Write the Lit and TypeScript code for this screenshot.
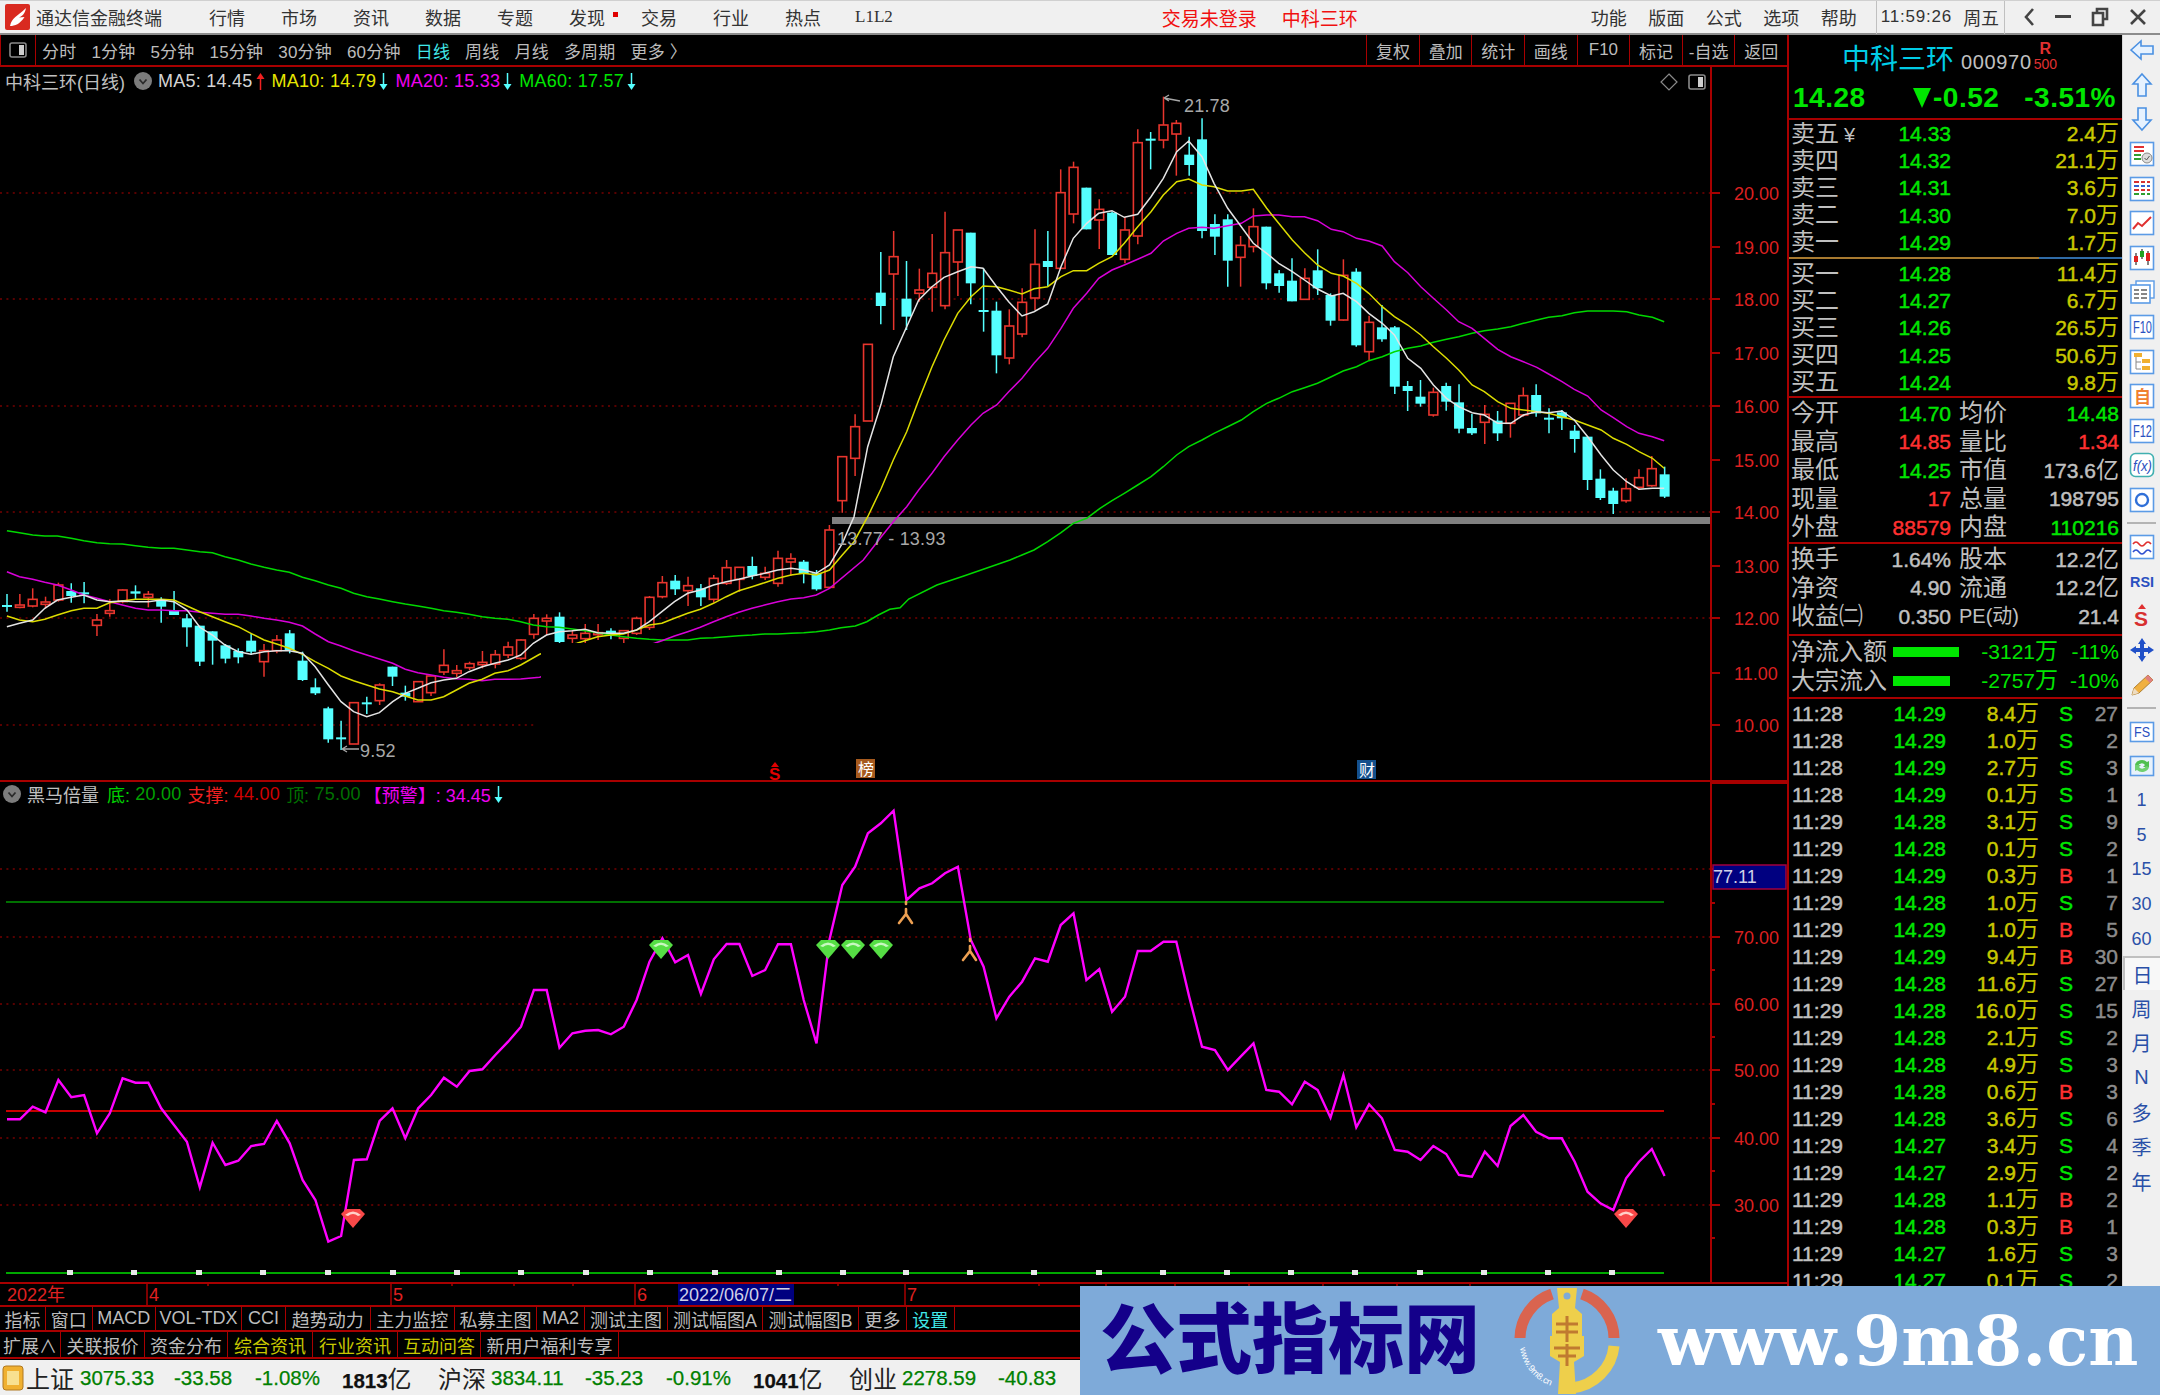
import { LitElement, html, css, svg } from "lit";
import { customElement } from "lit/decorators.js";

const RED = "#a80000";

// coordenadas leidas de la captura, por tramos: [x, y] de zoom
const toA = (p: number[]) => [p[0] / 1.742, 520 + p[1] / 3];
const toB = (p: number[]) => [780 + p[0] / 3, 80 + p[1] / 3];
const toC = (p: number[]) => [1200 + p[0] / 2.613, 90 + p[1] / 3];

function joinLine(a: number[][], b: number[][], c: number[][], cut = 835) {
  const pts = [
    ...a.map(toA).filter((p) => p[0] <= cut),
    ...b.map(toB).filter((p) => p[0] > cut && p[0] < 1295),
    ...c.map(toC).filter((p) => p[0] >= 1295),
  ];
  return pts.map((p) => `${p[0].toFixed(1)},${p[1].toFixed(1)}`).join(" ");
}

const MA5 = joinLine(
  [[12,320],[34,310],[57,300],[78,265],[100,240],[124,232],[146,225],[169,240],[191,245],[213,243],[236,245],[258,245],[281,240],[303,245],[326,270],[348,322],[370,345],[392,375],[415,395],[437,403],[460,395],[482,392],[504,392],[527,400],[549,440],[572,495],[594,545],[616,575],[639,590],[661,578],[684,545],[706,520],[728,505],[751,488],[773,480],[795,475],[817,455],[840,440],[862,430],[885,420],[907,405],[929,370],[952,345],[974,335],[997,332],[1019,328],[1041,338],[1064,340],[1086,340],[1109,330],[1131,305],[1153,275],[1175,245],[1198,220],[1220,210],[1243,195],[1265,185],[1287,178],[1310,168],[1332,160],[1355,150],[1378,145],[1400,150],[1422,160],[1445,135]],
  [[187,1390],[222,1310],[263,1100],[304,970],[340,830],[380,740],[416,660],[456,620],[492,592],[533,575],[573,560],[609,565],[650,620],[686,665],[726,708],[762,695],[803,672],[843,560],[880,475],[920,430],[956,400],[996,392],[1033,412],[1073,403],[1113,350],[1150,295],[1190,215],[1226,183],[1266,230],[1302,310],[1343,385],[1384,440],[1420,490],[1460,520],[1496,550],[1537,575]],
  [[273,570],[307,597],[343,618],[374,610],[409,635],[441,670],[476,700],[508,735],[543,805],[577,835],[610,885],[644,925],[676,950],[711,968],[743,975],[778,1000],[812,1000],[845,975],[880,965],[911,968],[946,963],[978,990],[1013,1040],[1048,1095],[1080,1140],[1115,1175],[1147,1198],[1182,1195],[1213,1195]]
);
const MA10 = joinLine(
  [[12,288],[34,300],[57,305],[78,298],[100,285],[124,272],[146,265],[169,265],[191,248],[213,243],[236,238],[258,238],[281,238],[303,240],[326,258],[348,275],[370,290],[392,305],[415,320],[437,340],[460,360],[482,372],[504,385],[527,403],[549,425],[572,445],[594,468],[616,482],[639,495],[661,507],[684,515],[706,528],[728,540],[751,540],[773,530],[795,510],[817,490],[840,478],[862,460],[885,452],[907,435],[940,403],[1005,370],[1019,362],[1041,350],[1064,345],[1086,342],[1109,330],[1131,315],[1153,310],[1175,295],[1198,280],[1220,268],[1243,250],[1265,230],[1287,212],[1310,200],[1332,188],[1355,175],[1378,165],[1400,160],[1422,165],[1445,150]],
  [[187,1425],[222,1385],[263,1310],[304,1225],[340,1140],[380,1055],[416,960],[456,860],[492,780],[533,700],[573,650],[609,618],[650,620],[686,630],[726,642],[762,626],[803,620],[843,590],[880,572],[920,572],[956,550],[996,530],[1033,490],[1073,440],[1113,395],[1150,345],[1190,305],[1226,297],[1266,315],[1302,320],[1343,333],[1384,333],[1420,328],[1460,385],[1496,430],[1537,480]],
  [[273,488],[307,525],[343,550],[374,558],[409,580],[441,610],[476,650],[508,680],[543,705],[577,735],[610,770],[644,805],[676,840],[711,885],[743,905],[778,935],[812,955],[845,960],[880,965],[911,970],[946,980],[978,990],[1013,1005],[1048,1020],[1080,1045],[1115,1063],[1147,1085],[1182,1105],[1213,1135]]
);
const MA20 = joinLine(
  [[12,155],[34,170],[57,178],[78,187],[100,195],[124,210],[146,225],[169,235],[191,245],[213,255],[236,265],[258,270],[281,270],[303,272],[326,272],[348,277],[370,280],[392,283],[415,283],[437,288],[460,295],[482,300],[504,307],[527,318],[549,342],[572,365],[594,378],[616,392],[639,405],[661,417],[684,430],[706,448],[728,458],[751,465],[773,472],[795,476],[817,478],[840,482],[862,478],[885,478],[907,477],[940,472],[1140,370],[1153,362],[1175,348],[1198,335],[1220,322],[1243,305],[1265,290],[1287,277],[1310,265],[1332,255],[1355,245],[1378,237],[1400,233],[1422,225],[1445,205]],
  [[250,1440],[304,1370],[340,1325],[380,1280],[416,1230],[456,1180],[492,1130],[533,1080],[573,1035],[609,1000],[650,975],[686,935],[726,895],[762,850],[803,805],[843,745],[880,685],[920,640],[956,595],[996,570],[1033,555],[1073,538],[1113,520],[1150,483],[1190,460],[1226,445],[1266,442],[1302,445],[1343,437],[1384,430],[1420,408],[1460,405],[1496,405],[1537,410]],
  [[273,380],[307,392],[343,418],[374,425],[409,445],[441,453],[476,468],[508,515],[543,548],[577,590],[610,625],[644,660],[676,695],[711,715],[743,745],[778,778],[812,800],[845,815],[880,832],[911,852],[946,875],[978,898],[1013,918],[1048,960],[1080,983],[1115,1010],[1147,1030],[1182,1040],[1213,1052]]
);
const MA60 = joinLine(
  [[12,32],[34,38],[57,45],[78,48],[100,48],[124,55],[146,62],[169,68],[191,71],[213,72],[236,77],[258,82],[281,85],[303,85],[326,90],[348,95],[370,98],[392,110],[415,120],[437,132],[460,142],[482,150],[504,157],[527,172],[549,182],[572,195],[594,205],[616,220],[639,230],[661,237],[684,245],[706,252],[728,258],[751,265],[773,272],[795,277],[817,283],[840,290],[862,295],[885,298],[907,305],[929,315],[952,320],[974,322],[997,327],[1019,332],[1041,338],[1064,345],[1086,350],[1109,355],[1131,358],[1153,360],[1175,360],[1198,360],[1220,355],[1243,353],[1265,350],[1287,347],[1310,345],[1332,342],[1355,342],[1378,340],[1400,338],[1422,335],[1445,330],[1465,323],[1490,318],[1510,305],[1530,285],[1550,268],[1568,263],[1583,237],[1632,195],[1679,168]],
  [[690,1440],[726,1425],[762,1410],[803,1385],[843,1358],[880,1330],[920,1315],[960,1285],[996,1262],[1033,1240],[1073,1215],[1113,1190],[1150,1160],[1190,1125],[1226,1100],[1266,1080],[1302,1060],[1343,1040],[1384,1020],[1420,995],[1460,970],[1496,955],[1537,935]],
  [[273,893],[307,880],[343,860],[374,843],[409,830],[441,812],[476,800],[508,785],[543,775],[577,768],[610,757],[644,748],[676,740],[711,730],[743,722],[778,717],[812,710],[845,700],[880,690],[911,682],[946,677],[978,668],[1013,663],[1048,663],[1080,663],[1115,665],[1147,675],[1182,682],[1213,695]],
  1000
);

// velas: cuerpo arriba, cuerpo abajo, mecha arriba, mecha abajo, tipo
type Vela = [number, number, number, number, string];
const velasA: Vela[] = [
  [255,260,222,275,"c"],[255,262,222,265,"r"],[238,258,205,262,"r"],[246,253,230,265,"r"],[195,240,188,245,"r"],[213,228,190,248,"c"],[217,222,186,250,"c"],[300,316,282,348,"r"],[272,280,238,290,"r"],[210,245,208,250,"r"],
  [214,221,196,240,"c"],[223,232,213,262,"r"],[240,260,232,308,"c"],[272,285,213,285,"c"],[295,322,282,380,"c"],[317,425,317,438,"c"],[334,362,334,434,"c"],[376,416,372,430,"c"],[393,412,385,430,"c"],[362,395,340,405,"c"],
  [392,425,372,470,"r"],[360,392,345,400,"r"],[340,390,330,400,"c"],[422,480,395,483,"c"],[502,520,475,525,"c"],[565,658,560,668,"c"],[652,652,602,690,"c"],[548,672,548,672,"r"],[547,547,530,582,"c"],[495,542,490,555,"r"],
  [440,470,440,498,"c"],[518,530,497,542,"c"],[485,545,485,545,"r"],[468,518,465,528,"r"],[436,456,388,465,"r"],[452,460,435,472,"r"],[431,443,425,450,"r"],[427,434,393,445,"r"],[404,432,390,445,"r"],[381,405,365,415,"r"],
  [360,415,358,420,"r"],[295,343,282,356,"r"],[295,303,283,345,"r"],[290,366,277,370,"c"],[345,355,330,372,"r"],[340,356,312,370,"r"],[338,342,312,360,"r"],[332,345,325,358,"c"],[332,355,332,372,"r"],[295,340,290,345,"r"],
  [232,322,228,330,"r"],[188,230,168,235,"r"],[182,208,165,225,"c"],[197,212,170,258,"r"],[205,232,192,258,"c"],[175,238,165,248,"r"],[143,190,120,195,"r"],[142,178,142,215,"r"],[138,168,110,178,"c"],[160,172,140,180,"r"],
  [115,190,92,200,"r"],[116,126,100,168,"r"],[125,162,120,190,"c"],[160,208,150,212,"c"],[30,202,15,205,"r"],
];
const velasB: Vela[] = [
  [1130,1262,1130,1298,"r"],[1040,1135,1003,1188,"r"],[793,1023,793,1023,"r"],[638,678,516,733,"c"],[530,582,453,750,"r"],[656,710,543,750,"c"],[630,640,566,665,"r"],[580,622,462,695,"r"],[518,677,395,688,"r"],[450,546,450,648,"r"],
  [458,610,458,673,"c"],[690,690,565,755,"c"],[692,826,665,880,"c"],[738,834,688,853,"r"],[667,762,625,772,"r"],[553,654,448,690,"r"],[543,561,453,620,"c"],[338,565,268,565,"r"],[262,402,245,430,"r"],[323,448,323,448,"c"],
  [388,420,358,507,"r"],[398,525,395,525,"c"],[450,538,410,550,"r"],[188,468,148,493,"r"],[176,176,156,268,"c"],[135,180,50,205,"r"],[130,162,120,287,"r"],[224,255,170,287,"c"],[178,453,115,475,"c"],[432,470,403,525,"c"],
  [418,542,403,620,"c"],[496,532,468,620,"r"],[440,500,385,517,"r"],[440,610,440,628,"c"],[580,618,570,638,"c"],[602,664,535,664,"c"],
];
const velasC: Vela[] = [
  [565,628,535,630,"r"],[541,595,478,615,"c"],[615,692,610,707,"c"],[556,690,508,692,"r"],[545,766,535,770,"c"],[697,785,677,810,"r"],[712,748,645,755,"c"],[712,890,708,912,"c"],[888,903,873,963,"c"],[920,941,870,950,"c"],
  [907,975,893,980,"r"],[888,935,878,962,"c"],[937,1016,883,1030,"c"],[1014,1030,972,1035,"c"],[973,997,945,1062,"r"],[992,1030,963,1053,"c"],[940,1000,940,1043,"r"],[917,975,892,980,"r"],[915,970,883,980,"c"],[983,983,955,1030,"c"],
  [967,985,960,1020,"c"],[1022,1047,1005,1088,"c"],[1040,1170,1040,1200,"c"],[1166,1224,1138,1230,"c"],[1202,1242,1193,1272,"c"],[1196,1232,1165,1238,"r"],[1163,1192,1138,1200,"r"],[1136,1187,1098,1190,"r"],[1153,1220,1130,1224,"c"],
];
const rebase = (v: Vela[], base: number): Vela[] =>
  v.map((k) => [base + k[0] / 3, base + k[1] / 3, base + k[2] / 3, base + k[3] / 3, k[4]]);
const VELAS: Vela[] = [...rebase(velasA, 520), ...rebase(velasB, 80), ...rebase(velasC, 90)];

const precio = [
  [20, 193], [19, 247], [18, 299], [17, 353], [16, 406], [15, 460], [14, 512], [13, 566], [12, 618], [11, 673], [10, 725],
];

const indA = [1048,1048,1010,1027,930,982,975,1090,1030,925,938,938,1015,1065,1115,1252,1118,1185,1172,1128,1122,1053,1120,1230,1290,1415,1398,1170,1168,1053,1015,1105,1015,975,923,950,903,898,855,815,770,660,660,833,790,782,780,793,770,690,575,505,577,555,672,568,522,522,618,600,523,523,690,820,510,345,290,190,160,122,390,355,340,310,290,510,590,745];
const indB = [680,635,565,575,465,430,630,597,725,680,543,543,515,515,680,830,840,900,860,820,960,965,1003,935,960,1043,915,1072,1003,1045,1140,1145,1170,1128,1152,1215,1220,1145,1188,1068,1035,1085,1105,1105,1175,1265,1300,1320,1225,1175,1137,1218];
const INDICADOR = [...indA, ...indB]
  .map((v, i) => `${(7 + 12.85 * i).toFixed(1)},${(770 + v / 3).toFixed(1)}`)
  .join(" ");

const marcasAbajo = [70, 134, 199, 263, 328, 393, 457, 521, 586, 650, 715, 779, 843, 906, 970, 1034, 1099, 1163, 1227, 1291, 1355, 1420, 1484, 1548, 1612];

const arrowIcon = (color: string, up: boolean) => html`<svg class="arrow" width="9" height="17" viewBox="0 0 9 17">
  ${up
    ? svg`<path d="M4.5 17V4" stroke=${color} stroke-width="1.5"/><path d="M4.5 0 8.5 6H.5Z" fill=${color}/>`
    : svg`<path d="M4.5 0V13" stroke=${color} stroke-width="1.5"/><path d="M4.5 17 8.5 11H.5Z" fill=${color}/>`}
</svg>`;

const roundArrow = html`<svg class="dot" width="18" height="18" viewBox="0 0 18 18">
  <circle cx="9" cy="9" r="9" fill="#7c7c7c"/><path d="M5.5 7.5 9 11.5 12.5 7.5" fill="none" stroke="#2a2a2a" stroke-width="1.8"/>
</svg>`;

const layoutIcon = html`<svg width="18" height="16" viewBox="0 0 18 16">
  <rect x="1" y="1" width="16" height="14" rx="2" fill="none" stroke="#8a8a8a" stroke-width="1.6"/><rect x="10" y="3" width="5" height="10" fill="#d0d0d0"/>
</svg>`;

const gema = (x: number, y: number, c: string, hi: string) => svg`
  <path d="M${x - 12} ${y + 5} L${x - 7} ${y} H${x + 7} L${x + 12} ${y + 5} L${x} ${y + 19} Z" fill=${c}/>
  <path d="M${x - 8} ${y + 6} Q${x} ${y - 1} ${x + 8} ${y + 6} L${x + 5} ${y + 7} Q${x} ${y + 3} ${x - 5} ${y + 7} Z" fill=${hi}/>`;

const corredor = (x: number, y: number) => svg`
  <g fill="none" stroke="#eda052" stroke-width="2.6" stroke-linecap="round">
    <path d="M${x} ${y} v2"/><path d="M${x} ${y + 7} v5 l-7 9 M${x} ${y + 12} l6 9"/>
  </g>`;

@customElement("k-chart")
export class KChart extends LitElement {
  static styles = css`
    :host { display: block; position: relative; width: 1787px; height: 1240px; }
    svg.canvas { display: block; }
    .legend { position: absolute; left: 5px; display: flex; align-items: center; font-size: 18px; white-space: nowrap; }
    .legend.up { top: 1px; }
    .legend.down { top: 714px; left: 3px; }
    .legend .arrow { margin-left: 3px; }
    .name { color: #c0c0c0; }
    .val { letter-spacing: .25px; }
    .white { color: #d4d4d4; margin-left: 6px; }
    .yellow { color: #e6e600; margin-left: 7px; }
    .magenta { color: #f000f0; margin-left: 7px; }
    .green { color: #00e600; margin-left: 7px; }
    .up .dot { margin-left: 9px; }
    .down .name { margin-left: 6px; }
    .g1 { color: #00d000; margin-left: 8px; }
    .g2 { color: #00a000; }
    .r1 { color: #f02020; margin-left: 6px; }
    .r2 { color: #d00000; }
    .d1 { color: #007000; margin-left: 6px; }
    .m1 { color: #f000f0; margin-left: 3px; }
    .icons { position: absolute; top: 6px; left: 1660px; display: flex; align-items: center; gap: 10px; }
    text { font-family: "Liberation Sans", "Noto Sans CJK SC", sans-serif; }
    .axis { font-size: 18px; fill: #dc2020; }
    .mark { font-size: 18px; fill: #a8a8a8; letter-spacing: .2px; }
    .ev { font-size: 16px; fill: #fff; }
    .date { font-size: 18px; fill: #e02020; }
    .sel { font-size: 18px; fill: #d0d0e8; }
  `;

  private _grid() {
    const dots = [193, 299, 406, 512, 618];
    return svg`
      ${dots.map((y) => svg`<line x1="0" x2="1710" y1=${y} y2=${y} stroke="#b00000" stroke-width="1.2" stroke-dasharray="2 4.4"/>`)}
      <line x1="0" x2="537" y1="725" y2="725" stroke="#b00000" stroke-width="1.2" stroke-dasharray="2 4.4"/>
      <rect x="832" y="517" width="878" height="7" fill="#808080"/>`;
  }

  private _velas() {
    return VELAS.map((k, i) => {
      const x = 7 + 12.85 * i;
      const col = k[4] === "c" ? "#55ffff" : "#e8352d";
      const h = Math.max(k[1] - k[0], 2);
      return svg`
        <line x1=${x} x2=${x} y1=${k[2]} y2=${k[3]} stroke=${col} stroke-width="1.5"/>
        ${k[4] === "c"
          ? svg`<rect x=${x - 5} y=${k[0]} width="10" height=${h} fill=${col}/>`
          : svg`<rect x=${x - 4.4} y=${k[0]} width="8.8" height=${h} fill="#000" stroke=${col} stroke-width="1.6"/>`}`;
    });
  }

  private _ejes() {
    return svg`
      <line x1="1711" x2="1711" y1="67" y2="1282" stroke=${RED} stroke-width="2"/>
      ${precio.map((p) => svg`
        <line x1="1711" x2="1720" y1=${p[1]} y2=${p[1]} stroke=${RED} stroke-width="2"/>
        <text class="axis" x="1734" y=${p[1] + 6.5}>${p[0].toFixed(2)}</text>`)}
      <line x1="0" x2="1787" y1="781" y2="781" stroke=${RED} stroke-width="2"/>
      <line x1="1711" x2="1787" y1="783" y2="783" stroke=${RED} stroke-width="2"/>`;
  }

  private _indicador() {
    const lineas = [[869, 80], [937, 70], [1004, 60], [1070, 50], [1138, 40], [1205, 30]];
    const medias = [903, 970, 1037, 1104, 1171, 1238];
    return svg`
      ${lineas.map((l) => svg`
        <line x1="0" x2="1710" y1=${l[0]} y2=${l[0]} stroke="#b00000" stroke-width="1.2" stroke-dasharray="2 4.4"/>
        <line x1="1711" x2="1720" y1=${l[0]} y2=${l[0]} stroke=${RED} stroke-width="2"/>
        ${l[1] < 80 ? svg`<text class="axis" x="1734" y=${l[0] + 6.5}>${l[1].toFixed(2)}</text>` : ""}`)}
      ${medias.map((y) => svg`<line x1="1711" x2="1715" y1=${y} y2=${y} stroke=${RED} stroke-width="2"/>`)}
      <line x1="6" x2="1664" y1="902" y2="902" stroke="#007000" stroke-width="2"/>
      <line x1="6" x2="1664" y1="1111" y2="1111" stroke="#c80000" stroke-width="2"/>
      <polyline points=${INDICADOR} fill="none" stroke="#ff00ff" stroke-width="2.4"/>
      ${[661, 828, 853, 881].map((x) => gema(x, 940, "#55dd44", "#c8f8c0"))}
      ${[353, 1626].map((x) => gema(x, 1209, "#f84848", "#ffd0c8"))}
      ${corredor(906, 902)}
      ${corredor(970, 939)}
      <line x1="6" x2="1664" y1="1273" y2="1273" stroke="#00a800" stroke-width="2"/>
      ${marcasAbajo.map((x) => svg`<rect x=${x - 3} y="1270" width="6" height="5" fill="#e8e8e8"/>`)}
      <rect x="1713" y="865" width="73" height="24" fill="#000080" stroke="#a00040" stroke-width="1.5"/>
      <text class="sel" x="1713" y="883">77.11</text>`;
  }

  private _fechas() {
    const largas = [147, 391, 635, 905];
    const cortas = [208, 452, 514, 573, 838, 1039, 1106, 1175, 1249, 1323, 1397, 1470];
    return svg`
      <line x1="0" x2="1787" y1="1283" y2="1283" stroke=${RED} stroke-width="2"/>
      <line x1="0" x2="1787" y1="1306" y2="1306" stroke=${RED} stroke-width="2"/>
      ${largas.map((x) => svg`<line x1=${x} x2=${x} y1="1283" y2="1306" stroke=${RED} stroke-width="1.5"/>`)}
      ${cortas.map((x) => svg`<line x1=${x} x2=${x} y1="1283" y2="1286" stroke=${RED} stroke-width="1.5"/>`)}
      <text class="date" x="7" y="1301">2022年</text>
      <text class="date" x="149" y="1301">4</text>
      <text class="date" x="393" y="1301">5</text>
      <text class="date" x="637" y="1301">6</text>
      <text class="date" x="907" y="1301">7</text>
      <rect x="678" y="1284" width="116" height="21" fill="#000080"/>
      <text class="sel" x="679" y="1301">2022/06/07/二</text>`;
  }

  render() {
    return html`
      <svg class="canvas" width="1787" height="1240" viewBox="0 67 1787 1240">
        ${this._grid()}
        ${this._velas()}
        <polyline points=${MA60} fill="none" stroke="#00d800" stroke-width="1.5"/>
        <polyline points=${MA20} fill="none" stroke="#d800d8" stroke-width="1.5"/>
        <polyline points=${MA10} fill="none" stroke="#dcdc00" stroke-width="1.5"/>
        <polyline points=${MA5} fill="none" stroke="#e4e4e4" stroke-width="1.5"/>
        <rect x="541" y="643" width="1168" height="110" fill="#000"/>
        <path d="M1180 101 L1164 98 M1164 98 l5 -3 M1164 98 l5 3" stroke="#a8a8a8" stroke-width="1.3" fill="none"/>
        <text class="mark" x="1184" y="112">21.78</text>
        <path d="M359 749 H342 M342 749 l5 -3 M342 749 l5 3" stroke="#a8a8a8" stroke-width="1.3" fill="none"/>
        <text class="mark" x="360" y="757">9.52</text>
        <text class="mark" x="837" y="545">13.77 - 13.93</text>
        <path d="M775 762 l4 5 h-8Z" fill="#e00000"/>
        <text x="769" y="780" font-size="17" font-weight="700" fill="#e00000">S</text>
        <rect x="856" y="759" width="19" height="19" fill="#a65a1e"/>
        <text class="ev" x="858" y="775">榜</text>
        <rect x="1357" y="760" width="19" height="19" fill="#14508c"/>
        <text class="ev" x="1359" y="776">财</text>
        ${this._ejes()}
        ${this._indicador()}
        ${this._fechas()}
      </svg>
      <div class="legend up">
        <span class="name">中科三环(日线)</span>${roundArrow}
        <span class="val white">MA5: 14.45</span>${arrowIcon("#f02020", true)}
        <span class="val yellow">MA10: 14.79</span>${arrowIcon("#55ffff", false)}
        <span class="val magenta">MA20: 15.33</span>${arrowIcon("#55ffff", false)}
        <span class="val green">MA60: 17.57</span>${arrowIcon("#55ffff", false)}
      </div>
      <div class="icons">
        <svg width="18" height="18" viewBox="0 0 18 18"><path d="M9 1 17 9 9 17 1 9Z" fill="none" stroke="#8a8a8a" stroke-width="1.2"/></svg>
        ${layoutIcon}
      </div>
      <div class="legend down">
        ${roundArrow}
        <span class="name">黑马倍量</span>
        <span class="g1">底:</span><span class="val g2">&nbsp;20.00</span>
        <span class="r1">支撑:</span><span class="val r2">&nbsp;44.00</span>
        <span class="d1">顶:</span><span class="val d1" style="margin-left:0">&nbsp;75.00</span>
        <span class="m1">【预警】: 34.45</span>${arrowIcon("#55ffff", false)}
      </div>
    `;
  }
}

const ventas = [["卖五", "14.33", "2.4"], ["卖四", "14.32", "21.1"], ["卖三", "14.31", "3.6"], ["卖二", "14.30", "7.0"], ["卖一", "14.29", "1.7"]];
const compras = [["买一", "14.28", "11.4"], ["买二", "14.27", "6.7"], ["买三", "14.26", "26.5"], ["买四", "14.25", "50.6"], ["买五", "14.24", "9.8"]];
const tabla1 = [
  ["今开", "14.70", "g", "均价", "14.48", "g"],
  ["最高", "14.85", "r", "量比", "1.34", "r"],
  ["最低", "14.25", "g", "市值", "173.6亿", "w"],
  ["现量", "17", "r", "总量", "198795", "w"],
  ["外盘", "88579", "r", "内盘", "110216", "g"],
];
const tabla2 = [
  ["换手", "1.64%", "w", "股本", "12.2亿", "w"],
  ["净资", "4.90", "w", "流通", "12.2亿", "w"],
  ["收益㈡", "0.350", "w", "PE(动)", "21.4", "w"],
];
const ticks = [
  ["11:28","14.29","8.4","S","27"],["11:28","14.29","1.0","S","2"],["11:28","14.29","2.7","S","3"],["11:28","14.29","0.1","S","1"],
  ["11:29","14.28","3.1","S","9"],["11:29","14.28","0.1","S","2"],["11:29","14.29","0.3","B","1"],["11:29","14.28","1.0","S","7"],
  ["11:29","14.29","1.0","B","5"],["11:29","14.29","9.4","B","30"],["11:29","14.28","11.6","S","27"],["11:29","14.28","16.0","S","15"],
  ["11:29","14.28","2.1","S","2"],["11:29","14.28","4.9","S","3"],["11:29","14.28","0.6","B","3"],["11:29","14.28","3.6","S","6"],
  ["11:29","14.27","3.4","S","4"],["11:29","14.27","2.9","S","2"],["11:29","14.28","1.1","B","2"],["11:29","14.28","0.3","B","1"],
  ["11:29","14.27","1.6","S","3"],["11:29","14.27","0.1","S","2"],
];

@customElement("quote-panel")
export class QuotePanel extends LitElement {
  static styles = css`
    :host { display: block; box-sizing: border-box; width: 335px; height: 1325px; border-left: 2px solid #a80000; overflow: hidden; color: #c0c0c0; line-height: 1; }
    .head { box-sizing: border-box; height: 85px; border-bottom: 2px solid #a80000; }
    .title { display: flex; align-items: flex-end; height: 34px; padding: 6px 0 0 53px; }
    .stock { font-size: 28px; line-height: 30px; color: #00cce6; }
    .code { font-size: 20px; letter-spacing: .65px; margin-left: 7px; line-height: 26px; }
    .rank { display: flex; flex-direction: column; align-items: center; color: #e03030; margin-left: 2px; align-self: flex-start; font-size: 14px; line-height: 14px; }
    .rank b { font-size: 16px; line-height: 16px; }
    .now { display: grid; grid-template-columns: 120px 88px 1fr; align-items: center; height: 30px; margin: 8px 6px 0 4px; color: #00e600; font-size: 28px; font-weight: 700; letter-spacing: .5px; }
    .now .chg { display: flex; align-items: center; gap: 2px; }
    .now .pct { text-align: right; }
    .book { box-sizing: border-box; padding: 0 3px 0 2px; }
    .sell { height: 137px; }
    .split { height: 2px; background: linear-gradient(90deg, #a87a30 0, #a87a30 250px, #306ca8 250px); }
    .buy { box-sizing: border-box; height: 139px; padding-top: 1px; border-bottom: 2px solid #a80000; }
    .row { display: grid; grid-template-columns: 100px 60px 1fr; align-items: center; height: 27.2px; }
    .lab { font-size: 24px; white-space: nowrap; }
    .num { font-size: 21px; font-weight: 400; -webkit-text-stroke: .45px; text-align: right; white-space: nowrap; }
    .vol { color: #c8c800; }
    .wan { font-size: 23px; font-weight: 400; -webkit-text-stroke: 0; }
    .yen { font-size: 20px; font-weight: 400; margin-left: 5px; }
    .g { color: #00e600; }
    .r { color: #ff3030; }
    .w { color: #c0c0c0; }
    .sect { box-sizing: border-box; padding: 1px 3px 0 2px; border-bottom: 2px solid #a80000; }
    .s1 { height: 146px; }
    .s2 { height: 92px; }
    .stat { display: grid; grid-template-columns: 50px 110px 60px 108px; align-items: center; height: 28.5px; }
    .stat .lab2 { padding-left: 8px; font-size: 24px; white-space: nowrap; }
    .stat .lab2.pe { font-size: 20px; }
    .flow { height: 63px; padding-top: 1px; }
    .fl { display: grid; grid-template-columns: 102px 72px 1fr 61px; align-items: center; height: 29px; color: #00e600; }
    .fl .lab { color: #c0c0c0; }
    .bar { display: block; height: 10px; background: #00e600; }
    .fl .n { font-size: 21px; text-align: right; white-space: nowrap; }
    .tick { display: grid; grid-template-columns: 52px 103px 93px 20px 1fr; align-items: center; height: 27px; padding: 0 4px 0 2px; }
    .tick .side { margin-left: 20px; font-size: 21px; -webkit-text-stroke: .45px; }
    .tick .cnt { color: #8c8c8c; }
    .tick .t { color: #c0c0c0; }
    .tick .volc { text-align: right; color: #c8c800; font-size: 21px; -webkit-text-stroke: .45px; white-space: nowrap; }
    .list { padding-top: 1px; }
  `;

  private _fila(r: string[], yen = false) {
    return html`<div class="row">
      <span class="lab">${r[0]}${yen ? html`<span class="yen">¥</span>` : ""}</span>
      <span class="num g">${r[1]}</span>
      <span class="num vol">${r[2]}<span class="wan">万</span></span>
    </div>`;
  }

  private _stat(r: string[]) {
    const conYi = (v: string) => v.endsWith("亿") ? html`${v.slice(0, -1)}<span class="wan">亿</span>` : v;
    return html`<div class="stat">
      <span class="lab">${r[0]}</span>
      <span class="num ${r[2]}">${r[1]}</span>
      <span class="lab2 ${r[3].startsWith("PE") ? "pe" : ""}">${r[3]}</span>
      <span class="num ${r[5]}">${conYi(r[4])}</span>
    </div>`;
  }

  render() {
    return html`
      <div class="head">
        <div class="title">
          <span class="stock">中科三环</span>
          <span class="code">000970</span>
          <span class="rank"><b>R</b>500</span>
        </div>
        <div class="now">
          <span>14.28</span>
          <span class="chg"><svg width="18" height="20" viewBox="0 0 18 20"><path d="M0 0H18L9 20Z" fill="#00e600"/></svg>-0.52</span>
          <span class="pct">-3.51%</span>
        </div>
      </div>
      <div class="book sell">${ventas.map((r, i) => this._fila(r, i === 0))}</div>
      <div class="split"></div>
      <div class="book buy">${compras.map((r) => this._fila(r))}</div>
      <div class="sect s1">${tabla1.map((r) => this._stat(r))}</div>
      <div class="sect s2">${tabla2.map((r) => this._stat(r))}</div>
      <div class="sect flow">
        <div class="fl"><span class="lab">净流入额</span><span><i class="bar" style="width:66px"></i></span><span class="n">-3121<span class="wan">万</span></span><span class="n">-11%</span></div>
        <div class="fl"><span class="lab">大宗流入</span><span><i class="bar" style="width:57px"></i></span><span class="n">-2757<span class="wan">万</span></span><span class="n">-10%</span></div>
      </div>
      <div class="list">
        ${ticks.map((t) => html`<div class="tick">
          <span class="num t">${t[0]}</span>
          <span class="num g">${t[1]}</span>
          <span class="volc">${t[2]}<span class="wan">万</span></span>
          <span class="side ${t[3] === "S" ? "g" : "r"}">${t[3]}</span>
          <span class="num cnt">${t[4]}</span>
        </div>`)}
      </div>
    `;
  }
}

const BOX = svg`<rect x="1.5" y="1.5" width="23" height="23" fill="#fff" stroke="#5b9be6" stroke-width="1.6"/>`;
const herramientas: Record<string, unknown> = {
  back: svg`<path d="M2 13 12 4V9H24V17H12V22Z" fill="#e6f2ff" stroke="#4a90e2" stroke-width="1.6"/>`,
  up: svg`<path d="M13 2 22 12H17V24H9V12H4Z" fill="#e6f2ff" stroke="#4a90e2" stroke-width="1.6"/>`,
  down: svg`<path d="M13 24 22 14H17V2H9V14H4Z" fill="#e6f2ff" stroke="#4a90e2" stroke-width="1.6"/>`,
  check: svg`${BOX}<path d="M5 6h10M5 10h10" stroke="#e03030" stroke-width="2"/><path d="M5 14h7M5 18h7" stroke="#30a030" stroke-width="2"/><circle cx="18" cy="17" r="5" fill="#ddd" stroke="#888"/><path d="M15.5 17l2 2 3-4" fill="none" stroke="#555"/>`,
  bars: svg`${BOX}<path d="M5 6h5M12 6h4M18 6h3" stroke="#d83030" stroke-width="2"/><path d="M5 10h5M12 10h4M18 10h3" stroke="#3060d0" stroke-width="2"/><path d="M5 14h5M12 14h4M18 14h3" stroke="#d83030" stroke-width="2"/><path d="M5 18h5M12 18h4M18 18h3" stroke="#30a030" stroke-width="2"/>`,
  line: svg`${BOX}<path d="M4 19 9 13 13 16 22 7" fill="none" stroke="#e03030" stroke-width="2"/>`,
  candle: svg`${BOX}<path d="M7 8v12M13 4v10M19 6v14" stroke="#303030" stroke-width="1.2"/><rect x="5" y="11" width="4" height="6" fill="#e02020"/><rect x="11" y="6" width="4" height="6" fill="#20a020"/><rect x="17" y="8" width="4" height="8" fill="#e02020"/>`,
  doc: svg`<rect x="7" y="2" width="18" height="17" fill="#fff" stroke="#5b9be6" stroke-width="1.4"/><rect x="2" y="6" width="19" height="18" fill="#fff" stroke="#5b9be6" stroke-width="1.6"/><path d="M5 11h5M12 11h6M5 15h5M12 15h6M5 19h5M12 19h6" stroke="#606060" stroke-width="1.6"/>`,
  f10: svg`${BOX}<text x="4" y="19" font-size="16" fill="#2a50c0" textLength="19" lengthAdjust="spacingAndGlyphs">F10</text>`,
  tree: svg`${BOX}<path d="M7 6v14h5M7 13h5" fill="none" stroke="#888"/><rect x="5" y="4" width="8" height="4" fill="#f0b030"/><rect x="13" y="10" width="8" height="4" fill="#f0b030"/><rect x="13" y="17" width="8" height="4" fill="#f0b030"/>`,
  zi: svg`${BOX}<text x="5" y="20" font-size="17" font-weight="700" fill="#f08030">自</text>`,
  f12: svg`${BOX}<text x="4" y="19" font-size="16" fill="#2a50c0" textLength="19" lengthAdjust="spacingAndGlyphs">F12</text>`,
  fx: svg`<rect x="1.5" y="1.5" width="23" height="23" rx="5" fill="#fff" stroke="#40b0b0" stroke-width="1.6"/><text x="4" y="19" font-size="14" font-style="italic" fill="#2a50c0" textLength="19" lengthAdjust="spacingAndGlyphs">f(x)</text>`,
  ring: svg`${BOX}<circle cx="13" cy="13" r="6" fill="none" stroke="#3070d8" stroke-width="2.4"/>`,
  wave: svg`${BOX}<path d="M4 10q3-4 6 0t6 0 6 0" fill="none" stroke="#e03030" stroke-width="1.6"/><path d="M4 18q3-4 6 0t6 0 6 0" fill="none" stroke="#3050d0" stroke-width="1.6"/>`,
  rsi: svg`<text x="1" y="19" font-size="15" font-weight="700" fill="#2a50c0" textLength="24" lengthAdjust="spacingAndGlyphs">RSI</text>`,
  s: svg`<path d="M13 1 17 6H9Z" fill="#e03030"/><text x="5" y="23" font-size="21" font-weight="700" fill="#d83030">S</text>`,
  move: svg`<path d="M13 1 17 7H15V11H19V9L25 13 19 17V15H15V19H17L13 25 9 19H11V15H7V17L1 13 7 9V11H11V7H9Z" fill="#2050c8"/>`,
  pencil: svg`<path d="M3 23 5 16 19 3 24 8 10 21Z" fill="#f0b040" stroke="#b08030"/><path d="M3 23 5 16 10 21Z" fill="#eedcc0"/><path d="M19 3 24 8 21 11 16 6Z" fill="#e08080"/>`,
  fs: svg`<rect x="1.5" y="3.5" width="23" height="19" fill="#fff" stroke="#5b9be6" stroke-width="1.6"/><text x="5" y="18" font-size="14" fill="#2a50c0" textLength="16" lengthAdjust="spacingAndGlyphs">FS</text>`,
  refresh: svg`<rect x="1.5" y="3.5" width="23" height="19" fill="#e8f2fc" stroke="#5b9be6" stroke-width="1.6"/><path d="M6 12a7 6 0 0 1 12-3l2-1v6h-6l2-2a4 4 0 0 0-7 1Z" fill="#50c050"/><path d="M20 14a7 6 0 0 1-12 3l-2 1v-6h6l-2 2a4 4 0 0 0 7-1Z" fill="#70d070"/>`,
};
const grupos = [
  ["back", "up", "down", "check", "bars", "line", "candle", "doc", "f10", "tree", "zi", "f12", "fx", "ring"],
  ["wave", "rsi", "s", "move", "pencil"],
  ["fs", "refresh"],
];
const periodos = ["1", "5", "15", "30", "60", "日", "周", "月", "N", "多", "季", "年"];

@customElement("side-tools")
export class SideTools extends LitElement {
  static styles = css`
    :host { display: block; box-sizing: border-box; width: 38px; background: #f0f0f0; border-left: 1px solid #d8d8d8; }
    .wrap { margin-top: -2px; }
    .it { display: flex; align-items: center; justify-content: center; height: 34.6px; color: #2a50a8; font-size: 20px; }
    .it.n { font-size: 18px; }
    .sep { display: flex; align-items: center; height: 12px; padding: 0 4px; }
    .sep i { display: block; width: 100%; height: 2px; background: #b4b4b4; }
    .it.on { box-sizing: border-box; height: 34px; margin: 0 0 .6px 0; background: #f8f8f8; border: 2px solid #c0c0c0; border-bottom: none; border-right: none; }
    text { font-family: "Liberation Sans", "Noto Sans CJK SC", sans-serif; }
  `;
  render() {
    const icono = (k: string) => html`<div class="it"><svg width="26" height="26" viewBox="0 0 26 26">${herramientas[k]}</svg></div>`;
    return html`<div class="wrap">
      ${grupos[0].map(icono)}
      <div class="sep"><i></i></div>
      ${grupos[1].map(icono)}
      <div class="sep"><i></i></div>
      ${grupos[2].map(icono)}
      ${periodos.map((p) => html`<div class="it ${p === "日" ? "on" : ""} ${/\d/.test(p) ? "n" : ""}">${p}</div>`)}
    </div>`;
  }
}

const menu = ["行情", "市场", "资讯", "数据", "专题", "发现", "交易", "行业", "热点"];
const menuDer = ["功能", "版面", "公式", "选项", "帮助"];
const periodosBar = [["分时"], ["1分钟"], ["5分钟"], ["15分钟"], ["30分钟"], ["60分钟"], ["日线", "on"], ["周线"], ["月线"], ["多周期"], ["更多 〉"]];
const botones = ["复权", "叠加", "统计", "画线", "F10", "标记", "-自选", "返回"];
const tabsA: [string, number, string?][] = [
  ["指标", 46], ["窗口", 46.5], ["MACD", 63.5], ["VOL-TDX", 86], ["CCI", 44], ["趋势动力", 84.5], ["主力监控", 84.5], ["私募主图", 82], ["MA2", 48], ["测试主图", 83], ["测试幅图A", 95], ["测试幅图B", 96], ["更多", 48], ["设置", 47.5, "cy"],
];
const tabsB: [string, number, string?][] = [
  ["扩展∧", 61], ["关联报价", 84], ["资金分布", 83], ["综合资讯", 85, "ye"], ["行业资讯", 85, "ye"], ["互动问答", 83, "ye"], ["新用户福利专享", 138],
];

@customElement("app-root")
export class AppRoot extends LitElement {
  static styles = css`
    :host { display: block; position: relative; width: 2160px; height: 1395px; background: #000; overflow: hidden; font-family: "Liberation Sans", "Noto Sans CJK SC", sans-serif; }
    .titlebar { box-sizing: border-box; display: flex; align-items: center; height: 35px; background: #f0f0f0; border-top: 1px solid #d0d0d0; border-bottom: 2px solid #8c8c8c; color: #333; font-size: 18px; white-space: nowrap; }
    .logo { margin-left: 5px; }
    .app { margin-left: 6px; width: 126px; }
    .menu { display: flex; gap: 36px; margin-left: 47px; }
    .menu .tip { position: relative; }
    .menu .tip::after { content: ""; position: absolute; left: 44px; top: 8px; width: 5px; height: 5px; background: #e00000; }
    .l1 { margin-left: 34px; font-family: "Liberation Serif", serif; font-size: 17px; }
    .login { margin-left: 269px; color: #f01010; font-size: 19px; }
    .login span { margin-left: 25px; }
    .menu.right { margin-left: 233px; gap: 21.5px; }
    .clock { box-sizing: border-box; display: flex; height: 33px; align-items: center; margin-left: 19px; padding: 0 5px 0 4px; border-left: 1px solid #c0c0c0; border-right: 1px solid #c0c0c0; font-size: 17px; letter-spacing: .8px; }
    .clock span { margin-left: 11px; font-size: 18px; letter-spacing: 0; }
    .win { display: flex; align-items: center; margin-left: 18px; gap: 20px; }
    .main { display: flex; height: 1325px; }
    .col { width: 1787px; }
    .toolbar { box-sizing: border-box; display: flex; align-items: center; height: 32px; border-bottom: 2px solid #a80000; color: #bcbcbc; font-size: 17px; }
    .tb-ico { box-sizing: border-box; display: flex; align-items: center; justify-content: center; width: 36px; height: 30px; border: 1px solid #a80000; border-bottom: none; border-top: none; border-left: 1px solid #a80000; margin-right: 6px; }
    .per { margin-right: 15px; white-space: nowrap; letter-spacing: .2px; }
    .per.on { color: #40e8e8; }
    .btns { display: flex; margin-left: auto; height: 30px; }
    .btn { box-sizing: border-box; display: flex; align-items: center; justify-content: center; width: 52.6px; border-left: 1px solid #a80000; white-space: nowrap; }
    .tabs { box-sizing: border-box; display: flex; height: 25px; border-bottom: 2px solid #a80000; color: #bcbcbc; font-size: 18px; }
    .tabs.b { height: 27px; }
    .tab { box-sizing: border-box; display: flex; align-items: center; justify-content: center; border-right: 1px solid #a80000; white-space: nowrap; overflow: hidden; }
    .tab.cy { color: #40e8e8; }
    .tab.ye { color: #c8c800; }
    .status { box-sizing: border-box; display: grid; grid-template-columns: 26px 54px 94px 81px 87px 96px 53px 94px 81px 87px 96px 53px 96px 1fr; align-items: center; height: 35px; background: #f0f0f0; font-size: 20.5px; color: #008000; -webkit-text-stroke: .25px; white-space: nowrap; }
    .status .zh { font-size: 24px; color: #222; -webkit-text-stroke: 0; }
    .status .vv { color: #111; font-weight: 700; }
    .status .yi { color: #222; font-size: 24px; font-weight: 400; -webkit-text-stroke: 0; }
    .status svg { margin-left: 2px; }
    .mark { position: absolute; left: 1080px; right: 0; top: 1286px; bottom: 0; display: flex; align-items: center; background: #7eaad9; }
    .mark .cn { margin-left: 20px; width: 400px; font-size: 76px; line-height: 1; font-weight: 900; color: #14008a; white-space: nowrap; }
    .mark svg { margin-left: 12px; flex: none; }
    .mark .url { margin-left: 36px; font-family: "DejaVu Serif", serif; font-weight: 700; font-size: 69px; color: #fff; white-space: nowrap; }
  `;

  render() {
    return html`
      <div class="titlebar">
        <svg class="logo" width="25" height="26" viewBox="0 0 25 26">
          <rect width="25" height="26" rx="2" fill="#d92a20"/>
          <path d="M5 22C7 13 12 13 21 4 20 10 17 12 14 13.5L19.5 13C15 20 10 22 5 22Z" fill="#fff"/>
        </svg>
        <span class="app">通达信金融终端</span>
        <div class="menu">${menu.map((m) => html`<span class=${m === "发现" ? "tip" : ""}>${m}</span>`)}</div>
        <span class="l1">L1L2</span>
        <span class="login">交易未登录<span>中科三环</span></span>
        <div class="menu right">${menuDer.map((m) => html`<span>${m}</span>`)}</div>
        <div class="clock">11:59:26<span>周五</span></div>
        <div class="win">
          <svg width="12" height="20" viewBox="0 0 12 20"><path d="M10 2 3 10 10 18" fill="none" stroke="#444" stroke-width="2.6"/></svg>
          <svg width="16" height="4" viewBox="0 0 16 4"><rect width="16" height="3" fill="#444"/></svg>
          <svg width="18" height="20" viewBox="0 0 18 20"><path d="M6 5V2H16V12H12M2 6H12V18H2Z" fill="none" stroke="#444" stroke-width="2.6"/></svg>
          <svg width="18" height="18" viewBox="0 0 18 18"><path d="M2 2 16 16M16 2 2 16" stroke="#444" stroke-width="2.6"/></svg>
        </div>
      </div>
      <div class="main">
        <div class="col">
          <div class="toolbar">
            <div class="tb-ico">${layoutIcon}</div>
            ${periodosBar.map((p) => html`<span class="per ${p[1] ?? ""}">${p[0]}</span>`)}
            <div class="btns">${botones.map((b) => html`<div class="btn">${b}</div>`)}</div>
          </div>
          <k-chart></k-chart>
          <div class="tabs a">${tabsA.map((t) => html`<div class="tab ${t[2] ?? ""}" style="width:${t[1]}px">${t[0]}</div>`)}</div>
          <div class="tabs b">${tabsB.map((t) => html`<div class="tab ${t[2] ?? ""}" style="width:${t[1]}px">${t[0]}</div>`)}</div>
        </div>
        <quote-panel></quote-panel>
        <side-tools></side-tools>
      </div>
      <div class="status">
        <svg width="22" height="26" viewBox="0 0 22 26"><rect x="1" y="1" width="20" height="24" rx="3" fill="#f0b030" stroke="#b07820"/><rect x="5" y="6" width="12" height="14" fill="#f8e090"/></svg>
        <span class="zh">上证</span><span>3075.33</span><span>-33.58</span><span>-1.08%</span>
        <span class="vv">1813<span class="yi">亿</span></span>
        <span class="zh">沪深</span><span>3834.11</span><span>-35.23</span><span>-0.91%</span>
        <span class="vv">1041<span class="yi">亿</span></span>
        <span class="zh">创业</span><span>2278.59</span><span>-40.83</span>
      </div>
      <div class="mark">
        <span class="cn">公式指标网</span>
        <svg width="110" height="109" viewBox="0 0 110 109">
          <g fill="none" stroke-width="11">
            <path d="M8 52A47 47 0 0 1 40 8" stroke="#d9644f"/>
            <path d="M70 8A47 47 0 0 1 102 52" stroke="#d9644f"/>
            <path d="M102 60A47 47 0 0 1 60 102" stroke="#eecf4b"/>
          </g>
          <path d="M45 2H65L63 22 70 28V50H72V70L62 76 64 108H46L48 76 38 70V50H40V28L47 22Z" fill="#eecf4b"/>
          <circle cx="55" cy="10" r="3.5" fill="#7eaad9"/>
          <path d="M44 38H66M44 46H66M55 30V56M42 62H68M46 70H64M55 58V80" stroke="#c07a30" stroke-width="3" fill="none"/>
          <defs><path id="ring" d="M8 62A47 47 0 0 0 48 102"/></defs>
          <text font-size="9" fill="#fff"><textPath href="#ring">www.9m8.cn</textPath></text>
        </svg>
        <span class="url">www.9m8.cn</span>
      </div>
    `;
  }
}
